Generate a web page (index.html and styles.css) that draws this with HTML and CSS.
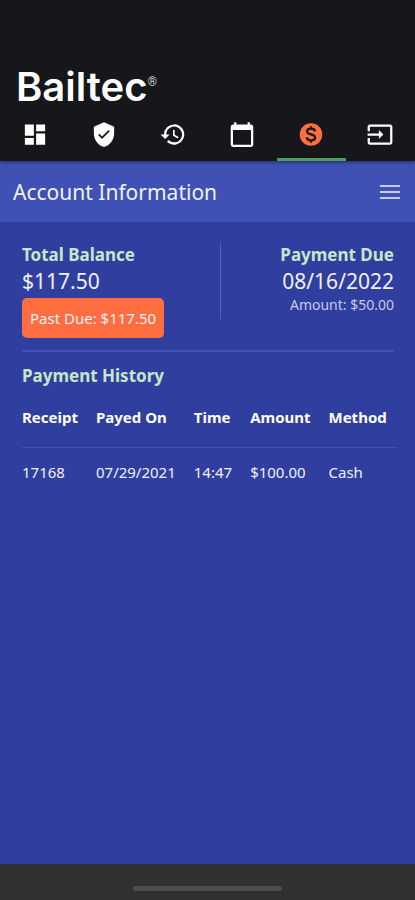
FILE: index.html
```html
<!DOCTYPE html>
<html lang="en">
<head>
    <meta charset="UTF-8">
    <meta name="viewport" content="width=device-width, initial-scale=1.0">
    <title>Bailtec - Account Information</title>
    <link rel="stylesheet" href="styles.css">
</head>
<body>
    <header class="app-header">
        <div class="logo">Bailtec<sup class="logo-mark">®</sup></div>
        <nav class="tabs">
            <a href="#dashboard" class="tab" aria-label="Dashboard">
                <svg viewBox="0 0 24 24"><path d="M3 13h8V3H3v10zm0 8h8v-6H3v6zm10 0h8V11h-8v10zm0-18v6h8V3h-8z"/></svg>
            </a>
            <a href="#check-in" class="tab" aria-label="Check in">
                <svg viewBox="0 0 24 24"><path d="M12 1L3 5v6c0 5.550 3.840 10.740 9 12 5.160-1.260 9-6.450 9-12V5l-9-4zm-1.700 15l-3.500-3.500 1.100-1.100 2.400 2.400 5.700-5.700 1.100 1.100-6.800 6.800z"/></svg>
            </a>
            <a href="#history" class="tab" aria-label="History">
                <svg viewBox="0 0 24 24"><path d="M13 3a9 9 0 0 0-9 9H1l3.890 3.890.07.140L9 12H6a7 7 0 1 1 2.060 4.940l-1.420 1.420A9 9 0 1 0 13 3zm-1 5v5l4.280 2.540.72-1.210-3.500-2.080V8H12z"/></svg>
            </a>
            <a href="#calendar" class="tab" aria-label="Calendar">
                <svg viewBox="0 0 24 24"><path d="M20 3h-1V1h-2v2H7V1H5v2H4c-1.100 0-2 .9-2 2v16c0 1.100.9 2 2 2h16c1.100 0 2-.9 2-2V5c0-1.100-.9-2-2-2zm0 18H4V8h16v13z"/></svg>
            </a>
            <a href="#account" class="tab active" aria-label="Account" aria-current="page">
                <svg viewBox="0 0 24 24">
                    <circle cx="12" cy="12" r="10"/>
                    <path class="coin-sign" d="M15.600 9.200C15.400 7.600 14 6.800 12 6.800S8.500 7.700 8.500 9.300C8.500 12.700 15.700 11.200 15.700 14.700 15.700 16.300 14.200 17.200 12 17.200S8.400 16.300 8.200 14.600M12 4.600v2.200M12 17.200v2.200"/>
                </svg>
            </a>
            <a href="#logout" class="tab" aria-label="Log out">
                <svg viewBox="0 0 24 24"><path d="M21 3H3c-1.100 0-2 .9-2 2v4h2V5h18v14H3v-4H1v4c0 1.100.9 2 2 2h18c1.100 0 2-.9 2-2V5c0-1.100-.9-2-2-2zM11 16l4-4-4-4v3H1v2h10v3z"/></svg>
            </a>
        </nav>
    </header>

    <div class="title-bar">
        <h1>Account Information</h1>
        <button type="button" class="menu-btn" aria-label="Menu">
            <svg viewBox="0 0 20 14"><path d="M0 0h20v2H0zM0 6h20v2H0zM0 12h20v2H0z"/></svg>
        </button>
    </div>

    <main class="content">
        <section class="summary">
            <div class="balance">
                <h2>Total Balance</h2>
                <div class="value">$117.50</div>
                <div class="past-due">Past Due: $117.50</div>
            </div>
            <div class="payment-due">
                <h2>Payment Due</h2>
                <div class="value">08/16/2022</div>
                <div class="amount">Amount: $50.00</div>
            </div>
        </section>

        <section class="history">
            <h2>Payment History</h2>
            <table>
                <thead>
                    <tr>
                        <th>Receipt</th>
                        <th>Payed On</th>
                        <th>Time</th>
                        <th>Amount</th>
                        <th>Method</th>
                    </tr>
                </thead>
                <tbody>
                    <tr>
                        <td>17168</td>
                        <td>07/29/2021</td>
                        <td>14:47</td>
                        <td>$100.00</td>
                        <td>Cash</td>
                    </tr>
                </tbody>
            </table>
        </section>
    </main>

    <footer class="system-bar">
        <div class="home-handle"></div>
    </footer>
</body>
</html>
```
FILE: styles.css
```css
* {
    box-sizing: border-box;
}

body {
    margin: 0;
    min-height: 100vh;
    display: flex;
    flex-direction: column;
    font-family: "Noto Sans", sans-serif;
    font-size: 15px;
    line-height: 20px;
    color: #f0f1fa;
    background: #303f9f;
}

h1,
h2 {
    margin: 0;
}

.app-header {
    padding-top: 64px;
    background: #15171a;
    box-shadow: 0 1px 4px rgba(0, 0, 0, 0.5);
    z-index: 1;
}

.logo {
    display: flex;
    padding: 0 16px;
    font-family: Inter, sans-serif;
    font-size: 40px;
    font-weight: 600;
    line-height: 46px;
    color: #fff;
}

.logo-mark {
    font-family: Roboto, sans-serif;
    font-size: 12px;
    font-weight: 400;
    line-height: 36px;
    color: #ccc;
}

.tabs {
    display: flex;
}

.tab {
    flex: 1;
    display: flex;
    justify-content: center;
    padding: 11px 0 10px;
    border-bottom: 3px solid transparent;
    color: #fff;
}

.tab svg {
    width: 28px;
    height: 27px;
    fill: currentColor;
}

.tab.active {
    color: #ff6e40;
    border-bottom-color: #4a9f5b;
}

.tab .coin-sign {
    fill: none;
    stroke: #15171a;
    stroke-width: 2;
}

.title-bar {
    display: flex;
    align-items: center;
    justify-content: space-between;
    padding: 16px 15px 15px 13px;
    background: #3f51b5;
}

.title-bar h1 {
    font-size: 21px;
    font-weight: 400;
    line-height: 30px;
}

.menu-btn {
    display: flex;
    padding: 0;
    border: none;
    background: none;
    color: #c5cae9;
    cursor: pointer;
}

.menu-btn svg {
    width: 20px;
    height: 14px;
    fill: currentColor;
}

.content {
    flex: 1;
    padding: 21px 21px 20px 22px;
}

.content h2 {
    font-size: 17px;
    font-weight: 700;
    line-height: 24px;
    color: #c8e6c9;
}

.summary {
    display: flex;
    align-items: flex-start;
    padding-bottom: 12px;
    border-bottom: 2px solid #3f51b5;
}

.balance {
    flex: 8;
}

.payment-due {
    flex: 7;
    height: 76px;
    border-left: 1px solid #5361b8;
    text-align: right;
}

.value {
    font-size: 21px;
    line-height: 28px;
}

.past-due {
    display: inline-block;
    margin-top: 3px;
    padding: 10px 8px;
    border-radius: 5px;
    background: #ff6e40;
}

.amount {
    font-size: 14px;
    color: #c5cae9;
}

.history {
    padding-top: 12px;
}

table {
    margin-top: 9px;
    border-collapse: collapse;
}

th,
td {
    padding: 14px 18px 14px 0;
    text-align: left;
    white-space: nowrap;
}

th {
    padding: 10px 18px 20px 0;
    border-bottom: 1px solid #3f51b5;
    font-weight: 700;
    color: #fff;
}

th:last-child,
td:last-child {
    padding-right: 10px;
}

.system-bar {
    display: flex;
    justify-content: center;
    padding: 22px 0 9px;
    background: #303030;
}

.home-handle {
    width: 36%;
    height: 5px;
    border-radius: 3px;
    background: #4c4c4c;
}
```
